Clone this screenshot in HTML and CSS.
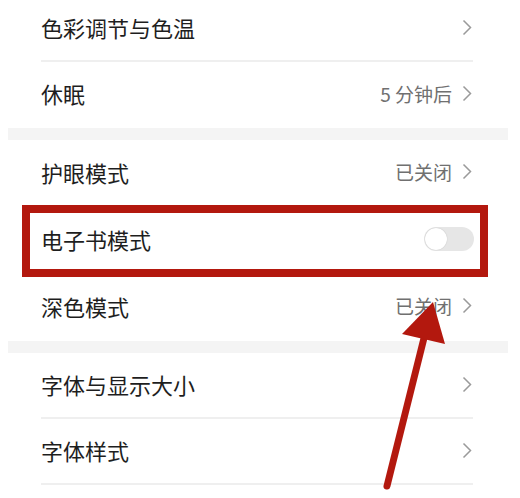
FILE: index.html
```html
<!DOCTYPE html>
<html lang="zh">

<head>
    <meta charset="UTF-8">
    <meta name="viewport" content="width=device-width, initial-scale=1.0">
    <title>显示与亮度</title>
    <link rel="stylesheet" href="styles.css">
</head>

<body>
    <div class="page">
        <!-- 第一组 -->
        <div class="group first">
            <div class="row line">
                <span class="label">色彩调节与色温</span>
                <span class="more"><svg class="chev" width="10" height="17" viewBox="0 0 10 17"><path d="M1.5 1.5 L8.5 8.5 L1.5 15.5" /></svg></span>
            </div>
            <div class="row">
                <span class="label">休眠</span>
                <span class="more">5 分钟后<svg class="chev" width="10" height="17" viewBox="0 0 10 17"><path d="M1.5 1.5 L8.5 8.5 L1.5 15.5" /></svg></span>
            </div>
        </div>

        <div class="gap"></div>

        <!-- 第二组 -->
        <div class="group middle">
            <div class="row">
                <span class="label">护眼模式</span>
                <span class="more">已关闭<svg class="chev" width="10" height="17" viewBox="0 0 10 17"><path d="M1.5 1.5 L8.5 8.5 L1.5 15.5" /></svg></span>
            </div>
            <div class="row marked">
                <span class="label">电子书模式</span>
                <span class="switch"><span class="knob"></span></span>
            </div>
            <div class="row">
                <span class="label">深色模式</span>
                <span class="more">已关闭<svg class="chev" width="10" height="17" viewBox="0 0 10 17"><path d="M1.5 1.5 L8.5 8.5 L1.5 15.5" /></svg></span>
            </div>
        </div>

        <div class="gap"></div>

        <!-- 第三组 -->
        <div class="group">
            <div class="row line">
                <span class="label">字体与显示大小</span>
                <span class="more"><svg class="chev" width="10" height="17" viewBox="0 0 10 17"><path d="M1.5 1.5 L8.5 8.5 L1.5 15.5" /></svg></span>
            </div>
            <div class="row line">
                <span class="label">字体样式</span>
                <span class="more"><svg class="chev" width="10" height="17" viewBox="0 0 10 17"><path d="M1.5 1.5 L8.5 8.5 L1.5 15.5" /></svg></span>
            </div>
        </div>

        <!-- 标注箭头 -->
        <svg class="arrow" width="520" height="498" viewBox="0 0 520 498">
            <line x1="387" y1="486" x2="426" y2="330" stroke="#b3180e" stroke-width="7" stroke-linecap="round" />
            <polygon points="433,302 402,334 445,344" fill="#b3180e" />
        </svg>
    </div>
</body>

</html>
```

FILE: styles.css
```css
body {
    margin: 0;
    background-color: #fff;
    font-family: "Noto Sans CJK SC", "Noto Sans", sans-serif;
    color: #1e1e1e;
}

.page {
    position: relative;
    width: 520px;
    height: 498px;
    overflow: hidden;
}

.group.first {
    margin-top: -4px;
}

.row {
    position: relative;
    display: flex;
    align-items: center;
    justify-content: space-between;
    box-sizing: border-box;
    height: 66px;
    padding: 0 48px 4px 41px;
}

.group.middle .row {
    height: 67px;
}

.row.line::after {
    content: "";
    position: absolute;
    left: 41px;
    right: 47px;
    bottom: 0;
    height: 2px;
    background-color: #efefef;
}

.label {
    font-size: 22px;
    line-height: 1;
}

.more {
    display: flex;
    align-items: center;
    font-size: 19px;
    color: #707070;
    line-height: 1;
}

.chev {
    margin-left: 10px;
    fill: none;
    stroke: #9a9a9a;
    stroke-width: 1.5;
}

.gap {
    height: 12px;
    margin: 0 12px 0 8px;
    background-color: #f4f4f4;
}

/* 电子书模式 红框 */
.row.marked::before {
    content: "";
    position: absolute;
    left: 22px;
    right: 32px;
    top: -2px;
    bottom: -3px;
    border: 8px solid #b3180e;
}

.switch {
    display: flex;
    align-items: center;
    width: 50px;
    height: 24px;
    margin-right: -2px;
    border-radius: 12px;
    background-color: #e6e6e6;
}

.knob {
    width: 22px;
    height: 22px;
    margin-left: 1px;
    border-radius: 50%;
    background-color: #fff;
    box-shadow: 0 0 1px rgba(0, 0, 0, 0.25);
}

.arrow {
    position: absolute;
    left: 0;
    top: 0;
}
```
